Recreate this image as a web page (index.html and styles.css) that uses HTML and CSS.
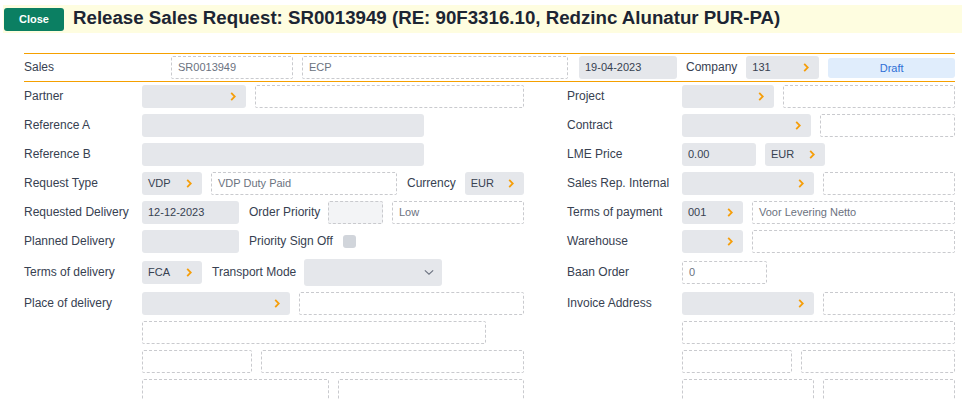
FILE: index.html
```html
<html lang="en">
<head>
    <meta charset="UTF-8">
    <meta name="viewport" content="width=device-width, initial-scale=1.0">
    <title>Release Sales Request</title>
    <link rel="stylesheet" href="styles.css">
</head>
<body>
    <!-- Title bar -->
    <div class="topbar">
        <button class="close-btn">Close</button>
        <h1>Release Sales Request: SR0013949 (RE: 90F3316.10, Redzinc Alunatur PUR-PA)</h1>
    </div>

    <div class="sheet">
        <!-- Header row -->
        <div class="sales-row">
            <span class="label sales-label">Sales</span>
            <div class="field dashed w-122">SR0013949</div>
            <div class="field dashed w-266">ECP</div>
            <div class="field filled w-98 date">19-04-2023</div>
            <span class="label">Company</span>
            <div class="field lookup w-73"><span>131</span><svg viewBox="0 0 6 10"><polyline points="1,1 5,5 1,9"/></svg></div>
            <div class="status">Draft</div>
        </div>

        <!-- Form grid -->
        <div class="form-grid">
            <!-- row 1 -->
            <span class="label">Partner</span>
            <div class="fields">
                <div class="field lookup w-104"><span></span><svg viewBox="0 0 6 10"><polyline points="1,1 5,5 1,9"/></svg></div>
                <div class="field dashed grow"></div>
            </div>
            <span class="label">Project</span>
            <div class="fields">
                <div class="field lookup w-92"><span></span><svg viewBox="0 0 6 10"><polyline points="1,1 5,5 1,9"/></svg></div>
                <div class="field dashed grow"></div>
            </div>

            <!-- row 2 -->
            <span class="label">Reference A</span>
            <div class="fields">
                <div class="field filled w-282"></div>
            </div>
            <span class="label">Contract</span>
            <div class="fields">
                <div class="field lookup w-129"><span></span><svg viewBox="0 0 6 10"><polyline points="1,1 5,5 1,9"/></svg></div>
                <div class="field dashed grow"></div>
            </div>

            <!-- row 3 -->
            <span class="label">Reference B</span>
            <div class="fields">
                <div class="field filled w-282"></div>
            </div>
            <span class="label">LME Price</span>
            <div class="fields">
                <div class="field filled w-74">0.00</div>
                <div class="field lookup w-60"><span>EUR</span><svg viewBox="0 0 6 10"><polyline points="1,1 5,5 1,9"/></svg></div>
            </div>

            <!-- row 4 -->
            <span class="label">Request Type</span>
            <div class="fields">
                <div class="field lookup w-60"><span>VDP</span><svg viewBox="0 0 6 10"><polyline points="1,1 5,5 1,9"/></svg></div>
                <div class="field dashed w-186">VDP Duty Paid</div>
                <span class="label inline">Currency</span>
                <div class="field lookup grow"><span>EUR</span><svg viewBox="0 0 6 10"><polyline points="1,1 5,5 1,9"/></svg></div>
            </div>
            <span class="label">Sales Rep. Internal</span>
            <div class="fields">
                <div class="field lookup w-132"><span></span><svg viewBox="0 0 6 10"><polyline points="1,1 5,5 1,9"/></svg></div>
                <div class="field dashed grow"></div>
            </div>

            <!-- row 5 -->
            <span class="label">Requested Delivery</span>
            <div class="fields">
                <div class="field filled w-97">12-12-2023</div>
                <span class="label inline w-label-op">Order Priority</span>
                <div class="field dashed soft w-55"></div>
                <div class="field dashed grow">Low</div>
            </div>
            <span class="label">Terms of payment</span>
            <div class="fields">
                <div class="field lookup w-61"><span>001</span><svg viewBox="0 0 6 10"><polyline points="1,1 5,5 1,9"/></svg></div>
                <div class="field dashed grow">Voor Levering Netto</div>
            </div>

            <!-- row 6 -->
            <span class="label">Planned Delivery</span>
            <div class="fields">
                <div class="field filled w-97"></div>
                <span class="label inline w-label-ps">Priority Sign Off</span>
                <span class="checkbox"></span>
            </div>
            <span class="label">Warehouse</span>
            <div class="fields">
                <div class="field lookup w-61"><span></span><svg viewBox="0 0 6 10"><polyline points="1,1 5,5 1,9"/></svg></div>
                <div class="field dashed grow"></div>
            </div>

            <!-- row 7 -->
            <span class="label">Terms of delivery</span>
            <div class="fields">
                <div class="field lookup w-60"><span>FCA</span><svg viewBox="0 0 6 10"><polyline points="1,1 5,5 1,9"/></svg></div>
                <span class="label inline w-label-tm">Transport Mode</span>
                <div class="select"><svg viewBox="0 0 12 8"><polyline points="1,1.5 6,6 11,1.5"/></svg></div>
            </div>
            <span class="label">Baan Order</span>
            <div class="fields">
                <div class="field dashed w-85">0</div>
            </div>

            <!-- row 8 -->
            <span class="label">Place of delivery</span>
            <div class="fields">
                <div class="field lookup w-148"><span></span><svg viewBox="0 0 6 10"><polyline points="1,1 5,5 1,9"/></svg></div>
                <div class="field dashed grow"></div>
            </div>
            <span class="label">Invoice Address</span>
            <div class="fields">
                <div class="field lookup w-132"><span></span><svg viewBox="0 0 6 10"><polyline points="1,1 5,5 1,9"/></svg></div>
                <div class="field dashed grow"></div>
            </div>

            <!-- address lines -->
            <span class="label"></span>
            <div class="fields">
                <div class="field dashed w-344"></div>
            </div>
            <span class="label"></span>
            <div class="fields">
                <div class="field dashed grow"></div>
            </div>

            <span class="label"></span>
            <div class="fields">
                <div class="field dashed w-110"></div>
                <div class="field dashed grow"></div>
            </div>
            <span class="label"></span>
            <div class="fields">
                <div class="field dashed w-110"></div>
                <div class="field dashed grow"></div>
            </div>

            <span class="label"></span>
            <div class="fields">
                <div class="field dashed w-187"></div>
                <div class="field dashed grow"></div>
            </div>
            <span class="label"></span>
            <div class="fields">
                <div class="field dashed w-132"></div>
                <div class="field dashed grow"></div>
            </div>
        </div>
    </div>
</body>
</html>
```

FILE: styles.css
```css
/* Base */
body {
    margin: 0;
    font-family: 'Liberation Sans', Arial, sans-serif;
    color: #374151;
    background: #ffffff;
}

/* Title bar */
.topbar {
    display: flex;
    align-items: center;
    gap: 9px;
    height: 28px;
    margin: 5px 2px 0 3px;
    background: #fefde0;
}

.close-btn {
    width: 60px;
    height: 23px;
    margin-left: 1px;
    padding: 0;
    border: none;
    border-radius: 3px;
    background: #0b7f62;
    color: #ffffff;
    font-family: 'Liberation Sans', Arial, sans-serif;
    font-size: 11px;
    font-weight: 700;
}

.topbar h1 {
    margin: 0 0 2px;
    font-size: 18.7px;
    font-weight: 700;
    color: #1c2533;
    white-space: nowrap;
}

/* Sheet */
.sheet {
    margin: 20px 9px 0 24px;
}

.sales-row {
    display: flex;
    align-items: center;
    gap: 9px;
    padding: 2px 0;
    border-top: 1px solid #f5a000;
    border-bottom: 1px solid #f5a000;
}

.sales-label {
    width: 138px;
}

.sales-row .date {
    margin-left: 2px;
}

.status {
    flex: 1;
    height: 20px;
    line-height: 20px;
    border-radius: 3px;
    background: #e0edfc;
    color: #2f6fd6;
    font-size: 11px;
    text-align: center;
}

.label {
    font-size: 12px;
    color: #374151;
    white-space: nowrap;
    margin-top: -2px;
}

.label.inline {
    margin-left: 1px;
}

.form-grid {
    display: grid;
    grid-template-columns: 118px 382px 158px 273px;
    row-gap: 6px;
    align-items: center;
    margin-top: 3px;
}

.form-grid > .label:nth-child(4n+3) {
    margin-left: 43px;
}

.fields {
    display: flex;
    align-items: center;
    gap: 9px;
}

/* Fields */
.field {
    box-sizing: border-box;
    height: 23px;
    padding: 0 6px;
    font-size: 11px;
    line-height: 21px;
    border-radius: 3px;
    white-space: nowrap;
}

.filled {
    background: #e5e7eb;
    color: #374151;
    line-height: 23px;
}

.dashed {
    border: 1px dashed #c9cace;
    border-radius: 2px;
    color: #6b7280;
}

.dashed.soft {
    background: #f3f4f6;
}

.lookup {
    display: flex;
    align-items: center;
    justify-content: space-between;
    padding-right: 10px;
    background: #e5e7eb;
    color: #374151;
}

.lookup svg {
    width: 6px;
    height: 9px;
    fill: none;
    stroke: #f59e0b;
    stroke-width: 2;
}

.grow {
    flex: 1;
}

.checkbox {
    width: 13px;
    height: 13px;
    border-radius: 3px;
    background: #d1d5db;
}

.select {
    display: flex;
    align-items: center;
    justify-content: flex-end;
    box-sizing: border-box;
    width: 138px;
    height: 27px;
    padding-right: 8px;
    border-radius: 3px;
    background: #e5e7eb;
}

.select svg {
    width: 10px;
    height: 7px;
    fill: none;
    stroke: #6b7280;
    stroke-width: 1.3;
}

/* Widths */
.w-55 { width: 55px; }
.w-60 { width: 60px; }
.w-61 { width: 61px; }
.w-73 { width: 73px; }
.w-74 { width: 74px; }
.w-85 { width: 85px; }
.w-92 { width: 92px; }
.w-97 { width: 97px; }
.w-98 { width: 98px; }
.w-104 { width: 104px; }
.w-110 { width: 110px; }
.w-122 { width: 122px; }
.w-129 { width: 129px; }
.w-132 { width: 132px; }
.w-148 { width: 148px; }
.w-186 { width: 186px; }
.w-187 { width: 187px; }
.w-266 { width: 266px; }
.w-282 { width: 282px; }
.w-344 { width: 344px; }

.w-label-op { width: 70px; }
.w-label-ps { width: 85px; }
.w-label-tm { width: 83px; }
```
